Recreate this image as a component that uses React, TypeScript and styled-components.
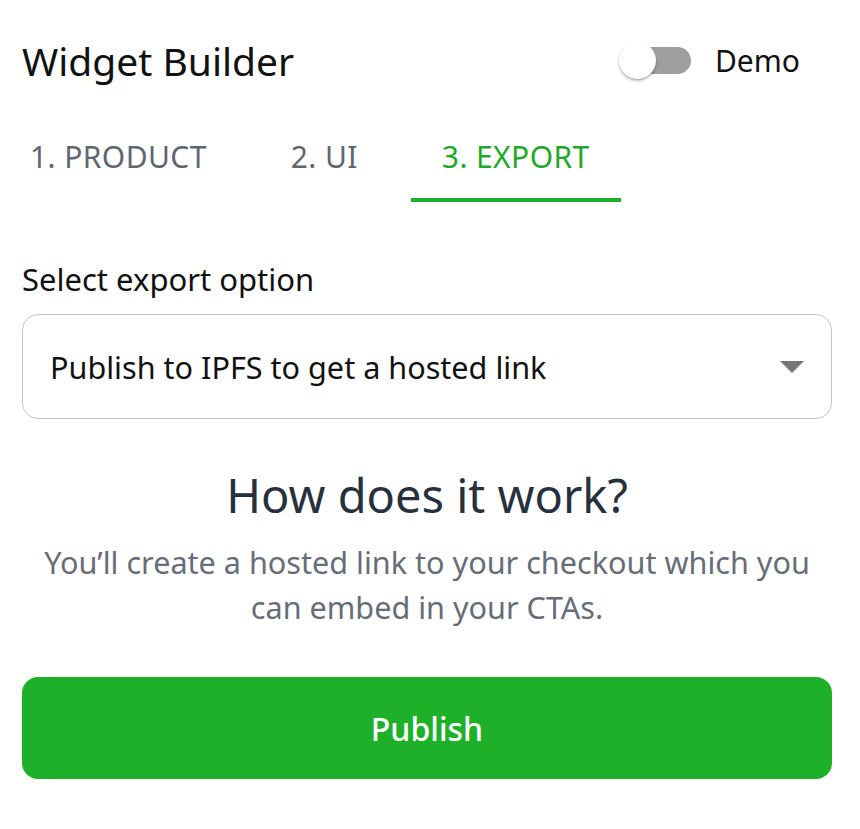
import React, { useState } from 'react';
import styled, { createGlobalStyle } from 'styled-components';

const GlobalStyle = createGlobalStyle`
  html, body {
    margin: 0;
    padding: 0;
    background: #ffffff;
  }
  body {
    font-family: "Noto Sans", "Open Sans", sans-serif;
  }
`;

const Page = styled.div`
  width: 860px;
  box-sizing: border-box;
  padding: 30px 28px 40px 22px;
`;

const Header = styled.div`
  display: flex;
  align-items: center;
  justify-content: space-between;
  height: 60px;
`;

const Title = styled.h1`
  margin: 0;
  font-size: 39px;
  font-weight: 400;
  color: #111111;
`;

const DemoToggle = styled.label`
  display: flex;
  align-items: center;
  gap: 24px;
  margin-right: 32px;
  font-size: 30px;
  color: #111111;
  cursor: pointer;
`;

const Track = styled.span<{ $on: boolean }>`
  position: relative;
  display: inline-block;
  width: 62px;
  height: 27px;
  margin-left: 12px;
  border-radius: 14px;
  background: ${p => (p.$on ? '#8fd694' : '#9e9e9e')};
`;

const Thumb = styled.span<{ $on: boolean }>`
  position: absolute;
  top: -5px;
  left: ${p => (p.$on ? '36px' : '-10px')};
  width: 37px;
  height: 37px;
  border-radius: 50%;
  background: ${p => (p.$on ? '#1fb02a' : '#ffffff')};
  box-shadow: 0 2px 3px rgba(0, 0, 0, 0.25), 0 1px 1px rgba(0, 0, 0, 0.12);
`;

const TabRow = styled.div`
  display: flex;
  gap: 22px;
  margin: 46px 0 0 -23px;
`;

const Tab = styled.button<{ $active: boolean }>`
  border: none;
  background: none;
  padding: 0 31px;
  height: 66px;
  display: flex;
  align-items: flex-start;
  font-family: inherit;
  font-size: 30px;
  letter-spacing: 0.4px;
  text-transform: uppercase;
  color: ${p => (p.$active ? '#1fa82a' : '#5f6670')};
  border-bottom: 4px solid ${p => (p.$active ? '#1fb02a' : 'transparent')};
  cursor: pointer;
`;

const FieldLabel = styled.div`
  margin-top: 56px;
  font-size: 31px;
  color: #111111;
`;

const Select = styled.div`
  margin-top: 14px;
  height: 105px;
  box-sizing: border-box;
  border: 1px solid #c4c4c4;
  border-radius: 16px;
  display: flex;
  align-items: center;
  justify-content: space-between;
  padding: 0 27px 0 27px;
  font-size: 30.6px;
  color: #111111;
`;

const Arrow = styled.svg`
  width: 24px;
  height: 12px;
`;

const Info = styled.div`
  margin-top: 44px;
  text-align: center;
`;

const InfoTitle = styled.h2`
  margin: 0;
  font-size: 47px;
  font-weight: 400;
  line-height: 64px;
  color: #27313d;
`;

const InfoText = styled.p`
  margin: 13px 0 0;
  font-size: 30.6px;
  line-height: 45px;
  color: #666d78;
`;

const PublishButton = styled.button`
  margin-top: 47px;
  width: 100%;
  height: 102px;
  border: none;
  border-radius: 16px;
  background: #1fb02a;
  color: #ffffff;
  font-family: inherit;
  font-size: 32px;
  font-weight: 500;
  cursor: pointer;
`;

const tabs = ['1. Product', '2. UI', '3. Export'];

export default function App() {
  const [demo, setDemo] = useState(false);
  const [active, setActive] = useState(2);

  return (
    <Page>
      <GlobalStyle />
      <Header>
        <Title>Widget Builder</Title>
        <DemoToggle onClick={() => setDemo(!demo)}>
          <Track $on={demo}>
            <Thumb $on={demo} />
          </Track>
          Demo
        </DemoToggle>
      </Header>
      <TabRow>
        {tabs.map((t, i) => (
          <Tab key={t} $active={i === active} onClick={() => setActive(i)}>
            {t}
          </Tab>
        ))}
      </TabRow>
      <FieldLabel>Select export option</FieldLabel>
      <Select>
        Publish to IPFS to get a hosted link
        <Arrow viewBox="0 0 24 12">
          <path d="M0 0 L24 0 L12 12 Z" fill="#757575" />
        </Arrow>
      </Select>
      <Info>
        <InfoTitle>How does it work?</InfoTitle>
        <InfoText>
          You’ll create a hosted link to your checkout which you
          <br />
          can embed in your CTAs.
        </InfoText>
      </Info>
      <PublishButton>Publish</PublishButton>
    </Page>
  );
}
